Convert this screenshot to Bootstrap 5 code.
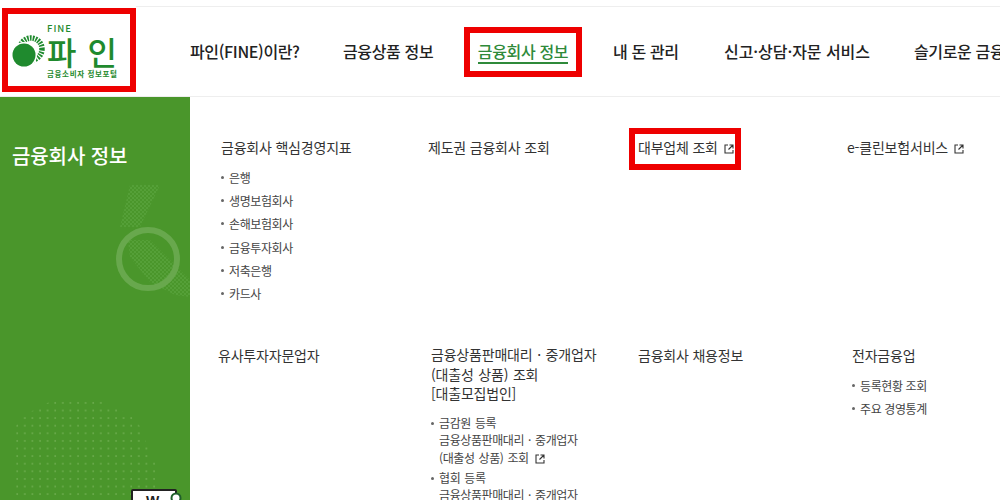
<!DOCTYPE html>
<html lang="ko">
<head>
    <meta charset="UTF-8">
    <meta name="viewport" content="width=device-width, initial-scale=1.0">
    <title>금융회사 정보</title>
    <link href="https://cdn.jsdelivr.net/npm/bootstrap@5.3.0/dist/css/bootstrap.min.css" rel="stylesheet">
    <style>
        html, body { height: 500px; overflow: hidden; }
        body {
            font-family: "Noto Sans CJK KR", "Noto Sans", sans-serif;
            color: #333;
            background: #fff;
        }
        .site-top { height: 97px; border-bottom: 1px solid #eee; }
        .logo-box {
            width: 134px; height: 84px; margin: 8px 0 0 2px;
            border: 6px solid #ee0000;
        }
        .logo-box svg { display: block; }
        .logo-box text { font-family: "Noto Sans CJK KR", sans-serif; fill: #1f8a2e; }
        .gnb {
            margin-top: 6px; height: 91px; border-top: 1px solid #eee; min-width: 0;
            white-space: nowrap; font-size: 16px; font-weight: 500; letter-spacing: -0.35px;
        }
        .gnb a { color: #222; text-decoration: none; }
        .gnb > div:not(.gnb-3) { margin-bottom: 2px; }
        .gnb-1 { margin-left: 54px; width: 108px; flex-shrink: 0; }
        .gnb-2 { margin-left: 45px; width: 90px; flex-shrink: 0; }
        .gnb-3 { margin-left: 31px; border: 6px solid #ee0000; height: 50px; width: 118px; flex-shrink: 0; }
        .gnb .gnb-3 a { color: #2f8a3a; border-bottom: 2px solid #2f8a3a; line-height: 21px; }
        .gnb-4 { margin-left: 31px; width: 66px; flex-shrink: 0; }
        .gnb-5 { margin-left: 45px; width: 146px; flex-shrink: 0; letter-spacing: -0.05px; }
        .gnb-6 { margin-left: 44px; flex-shrink: 0; }
        .side-panel { width: 190px; height: 403px; background: #4a962b; flex-shrink: 0; overflow: hidden; }
        .side-title { color: #fff; font-size: 20px; font-weight: 500; padding: 44px 0 0 12px; letter-spacing: -0.1px; line-height: 30px; }
        .side-art { position: absolute; left: 0; top: 0; }
        .search-tag {
            position: absolute; left: 131px; top: 392px; width: 46px; height: 22px;
            background: #fff; border: 2px solid #222; border-radius: 2px;
            font: 700 14px/20px "Liberation Sans", sans-serif; color: #222; padding-left: 13px;
        }
        .tag-lens { position: absolute; left: 170px; top: 395px; }
        .menu-area { flex: 1; font-size: 14px; color: #333; letter-spacing: -0.2px; }
        .menu-row { display: grid; }
        .menu-row-1 { height: 226px; padding: 40px 0 0 31px; grid-template-columns: 207px 210px 209px 1fr; }
        .menu-row-2 { padding: 22px 0 0 28px; grid-template-columns: 213px 207px 214px 1fr; }
        .menu-head { line-height: 20px; }
        .head-tight { line-height: 19.5px; word-spacing: 1px; }
        .sub-list { list-style: none; padding: 0; margin: 0; font-size: 12px; color: #444; letter-spacing: -0.4px; }
        .sub-list li { position: relative; padding-left: 8px; }
        .sub-list li::before {
            content: ""; position: absolute; left: 0; top: 10px; width: 3px; height: 3px;
            border-radius: 50%; background: #666;
        }
        .list-a { margin-top: 9px; line-height: 23.2px; }
        .list-b { margin-top: 10px; line-height: 17.5px; }
        .list-b li { margin-bottom: 2.5px; word-spacing: 1px; }
        .list-b li::before { top: 8px; }
        .list-c { margin-top: 9px; line-height: 23px; }
        .flagged-item {
            width: 112px; height: 42px; margin: -9px 0 0 -9px; padding: 3px 0 0 3px;
            border: 6px solid #ee0000; white-space: nowrap;
        }
        .ext-ico { display: inline-block; vertical-align: -1px; margin-left: 2px; }
    </style>
</head>
<body>
    <header class="site-top d-flex">
        <div class="logo-box flex-shrink-0">
            <svg width="122" height="72" viewBox="0 0 122 72">
                <!-- rayed crescent behind the disc -->
                <circle cx="23" cy="35" r="11" fill="none" stroke="#1f8a2e" stroke-width="5.500" stroke-dasharray="1.700 1.100"/>
                <circle cx="16" cy="41" r="13" fill="#fff"/>
                <circle cx="16" cy="41" r="11.500" fill="#1f8a2e"/>
                <text x="39" y="18" font-size="9.500" font-weight="500" textLength="24">FINE</text>
                <text x="39" y="51" font-size="32" font-weight="500" textLength="70">파 인</text>
                <text x="39" y="63" font-size="7.500" font-weight="700" textLength="70">금융소비자 정보포털</text>
            </svg>
        </div>
        <nav class="gnb flex-grow-1 d-flex align-items-center overflow-hidden">
            <div class="gnb-1"><a href="#">파인(FINE)이란?</a></div>
            <div class="gnb-2"><a href="#">금융상품 정보</a></div>
            <div class="gnb-3 d-flex align-items-center justify-content-center"><a href="#">금융회사 정보</a></div>
            <div class="gnb-4"><a href="#">내 돈 관리</a></div>
            <div class="gnb-5"><a href="#">신고·상담·자문 서비스</a></div>
            <div class="gnb-6"><a href="#">슬기로운 금융생활</a></div>
        </nav>
    </header>
    <main class="d-flex">
        <aside class="side-panel position-relative">
            <svg class="side-art" width="190" height="403" viewBox="0 0 190 403">
                <defs>
                    <pattern id="dotsA" width="7.600" height="7.600" patternUnits="userSpaceOnUse">
                        <circle cx="2" cy="2" r="0.700" fill="#8cc06e"/>
                    </pattern>
                    <pattern id="dotsB" width="4" height="4" patternUnits="userSpaceOnUse">
                        <rect width="2" height="2" fill="#55a038"/>
                        <rect x="2" y="2" width="2" height="2" fill="#55a038"/>
                    </pattern>
                </defs>
                <path d="M130 88 L160 88 L140 130 L120 130 Z" fill="url(#dotsB)"/>
                <path d="M128 143 L150 143 L172 165 L190 183 L190 200 L175 198 L150 185 L130 160 Z" fill="url(#dotsB)"/>
                <circle cx="148" cy="162" r="29" fill="none" stroke="#68a84d" stroke-width="6"/>
                <path d="M53 303 L100 303 L115 311 L130 318 L138 325 L146 345 L155 365 L155 403 L15 403 L15 330 L24 318 L38 311 Z" fill="url(#dotsA)"/>
            </svg>
            <div class="side-title position-relative">금융회사 정보</div>
            <div class="search-tag">W</div>
            <svg class="tag-lens" width="12" height="12" viewBox="0 0 12 12"><circle cx="6" cy="6" r="4.500" fill="#fff" stroke="#1f5f2a" stroke-width="2"/></svg>
        </aside>
        <div class="menu-area">
            <div class="menu-row menu-row-1">
                <div>
                    <div class="menu-head">금융회사 핵심경영지표</div>
                    <ul class="sub-list list-a">
                        <li>은행</li>
                        <li>생명보험회사</li>
                        <li>손해보험회사</li>
                        <li>금융투자회사</li>
                        <li>저축은행</li>
                        <li>카드사</li>
                    </ul>
                </div>
                <div class="menu-head">제도권 금융회사 조회</div>
                <div><div class="flagged-item">대부업체 조회 <svg class="ext-ico" width="10" height="10" viewBox="0 0 10 10" fill="none" stroke="#333" stroke-width="1.100"><path d="M4 1H1v8h8V6M5.500 1H9v3.500M9 1L4.500 5.500"/></svg></div></div>
                <div class="menu-head">e-클린보험서비스 <svg class="ext-ico" width="10" height="10" viewBox="0 0 10 10" fill="none" stroke="#333" stroke-width="1.100"><path d="M4 1H1v8h8V6M5.500 1H9v3.500M9 1L4.500 5.500"/></svg></div>
            </div>
            <div class="menu-row menu-row-2">
                <div class="menu-head">유사투자자문업자</div>
                <div>
                    <div class="menu-head head-tight">금융상품판매대리 · 중개업자<br>(대출성 상품) 조회<br>[대출모집법인]</div>
                    <ul class="sub-list list-b">
                        <li>금감원 등록<br>금융상품판매대리 · 중개업자<br>(대출성 상품) 조회 <svg class="ext-ico" width="10" height="10" viewBox="0 0 10 10" fill="none" stroke="#333" stroke-width="1.100"><path d="M4 1H1v8h8V6M5.500 1H9v3.500M9 1L4.500 5.500"/></svg></li>
                        <li>협회 등록<br>금융상품판매대리 · 중개업자</li>
                    </ul>
                </div>
                <div class="menu-head">금융회사 채용정보</div>
                <div>
                    <div class="menu-head">전자금융업</div>
                    <ul class="sub-list list-c">
                        <li>등록현황 조회</li>
                        <li>주요 경영통계</li>
                    </ul>
                </div>
            </div>
        </div>
    </main>
    <script src="https://cdn.jsdelivr.net/npm/bootstrap@5.3.0/dist/js/bootstrap.bundle.min.js"></script>
</body>
</html>
